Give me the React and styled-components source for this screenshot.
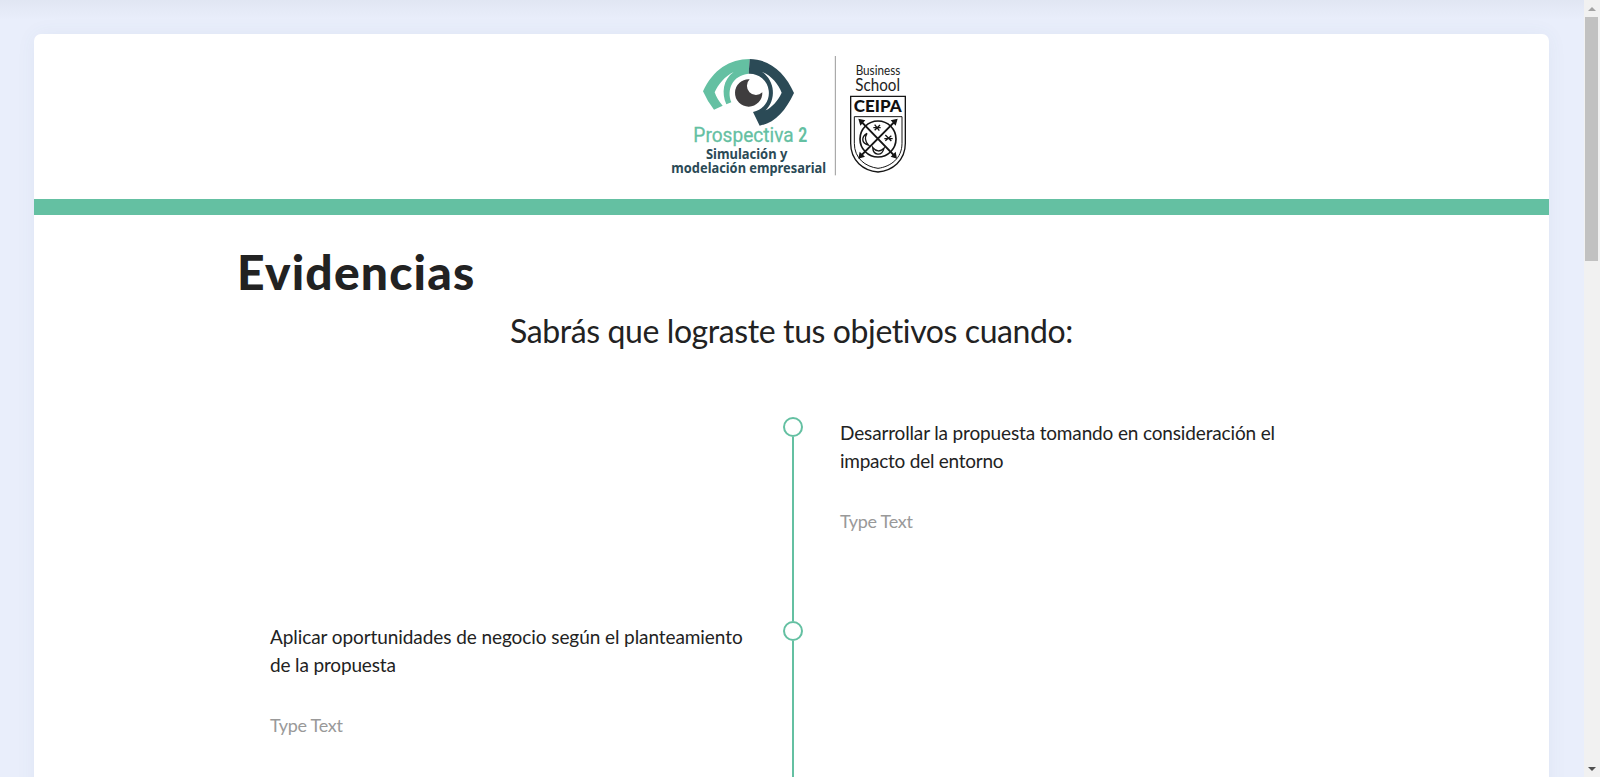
import React from "react";
import styled, { createGlobalStyle } from "styled-components";

const GREEN = "#64c0a2";
const NAVY = "#2b4a56";

const GlobalStyle = createGlobalStyle`
  * { box-sizing: border-box; }
  html, body { margin: 0; padding: 0; }
  body { overflow: hidden; font-family: Lato, "Liberation Sans", sans-serif; color: #222; }
`;

const Page = styled.div`
  display: flex;
  height: 777px;
  overflow: hidden;
  background: #e9eefb;
`;

const Viewport = styled.main`
  flex: 1;
  padding: 34px 35px 0 34px;
  overflow: hidden;
  background: linear-gradient(rgba(70, 80, 90, 0.05), rgba(70, 80, 90, 0) 20px);
`;

const Card = styled.article`
  height: 900px;
  background: #fff;
  border-radius: 7px;
  box-shadow: 0 0 20px rgba(60, 110, 140, 0.06);
`;

const Header = styled.header`
  display: flex;
  height: 181px;
  padding: 12px 0 0 626px;
  border-bottom: 16px solid ${GREEN};
`;

const Title = styled.h1`
  margin: 0;
  padding: 28px 0 0 203px;
  font-size: 48px;
  line-height: 58px;
  font-weight: 900;
  letter-spacing: 1.15px;
  white-space: nowrap;
`;

const Subtitle = styled.h2`
  margin: 0;
  padding-top: 8px;
  font-size: 32px;
  line-height: 44px;
  font-weight: 400;
  letter-spacing: -0.4px;
  text-align: center;
  white-space: nowrap;
`;

const Timeline = styled.section`
  display: flex;
  flex-direction: column;
  width: 1046px;
  margin: 64px 0 0 236px;
`;

const Entry = styled.div`
  display: grid;
  grid-template-columns: 476px 94px 476px;
  height: 204px;
`;

const Track = styled.div`
  grid-column: 2;
  grid-row: 1;
  display: flex;
  flex-direction: column;
  align-items: center;
`;

const Dot = styled.div`
  width: 20px;
  height: 20px;
  border: 2px solid ${GREEN};
  border-radius: 50%;
`;

const Stem = styled.div`
  flex: 1;
  width: 2px;
  background: ${GREEN};
`;

const Body = styled.div`
  grid-column: ${(p) => (p.$side === "right" ? 3 : 1)};
  grid-row: 1;
  padding-top: 2px;
  font-size: 19px;
  line-height: 28px;
`;

const Line = styled.div`
  white-space: nowrap;
  letter-spacing: ${(p) => p.$spacing}px;
`;

const Placeholder = styled.p`
  margin: 32px 0 0;
  color: #999;
  font-size: 18px;
  letter-spacing: -0.3px;
`;

const Scrollbar = styled.aside`
  display: flex;
  flex-direction: column;
  align-items: center;
  width: 16px;
  padding-right: 1px;
  background: #f1f1f1;
`;

const ArrowBox = styled.div`
  display: flex;
  align-items: center;
  justify-content: center;
  height: 17px;
`;

const Thumb = styled.div`
  width: 13px;
  height: 244px;
  margin-bottom: auto;
  background: #c1c1c1;
`;

function Logo() {
  return (
    <svg width="260" height="140" viewBox="0 0 780 420" aria-label="Prospectiva 2">
      <g transform="translate(114 26)">
        <path d="M155 13C95 13 45 45 15 110Q28 140 48 165L74 153C62 140 55 127 50 113C60 90 80 65 107 52C75 75 70 115 85 149L100 143C85 105 103 62 152 57Z" fill={GREEN} />
        <path d="M155 13C215 13 262 55 288 115C262 170 230 205 185 213L165 172A58 58 0 0 0 152 57Z" fill={NAVY} />
        <path d="M193 52C220 62 242 90 251 114C240 138 222 158 203 167C235 135 232 80 193 52Z" fill="#fff" />
        <path d="M155 74A41 41 0 1 0 193 113A21 21 0 0 1 155 74Z" fill="#3f3d3e" />
      </g>
      <g fontFamily="Roboto, sans-serif" fill={GREEN}>
        <text transform="translate(100 289) scale(0.87 1)" fontSize="62" textLength="346" lengthAdjust="spacingAndGlyphs" stroke={GREEN} strokeWidth="0.8">Prospectiva</text>
        <text x="415" y="289" fontSize="59" fontWeight="700" textLength="27" lengthAdjust="spacingAndGlyphs">2</text>
      </g>
      <g fontFamily="Noto Sans, sans-serif" fontWeight="700" fill={NAVY}>
        <text x="138" y="340" fontSize="40" textLength="244" lengthAdjust="spacingAndGlyphs">Simulación y</text>
        <text x="34" y="381" fontSize="40" textLength="464" lengthAdjust="spacingAndGlyphs">modelación empresarial</text>
      </g>
      <path d="M526 30V388" stroke="#999" strokeWidth="3" />
      <g fontFamily="Lato, sans-serif" fill="#222">
        <text x="587" y="86" fontSize="38" textLength="134" lengthAdjust="spacingAndGlyphs">Business</text>
        <text x="586" y="135" fontSize="50" textLength="134" lengthAdjust="spacingAndGlyphs">School</text>
        <text x="581" y="199" fontSize="51" fontWeight="900" fill="#111" textLength="144" lengthAdjust="spacing">CEIPA</text>
      </g>
      <g fill="none" stroke="#151515" strokeWidth="3">
        <path d="M572 151H736V292C736 344 697 374 654 378C610 374 572 344 572 292Z" strokeWidth="4" />
        <path d="M583 212H726V292C726 337 692 362 654 367C616 362 583 337 583 292Z" />
        <circle cx="654" cy="279" r="54" strokeWidth="5" />
        <path d="M601 224L705 331M707 224L601 331" strokeWidth="6" />
        <path d="M644 236L658 254M660 237L644 253M640 245H662M676 267L694 285M694 269L676 284M673 278H698" strokeWidth="4" />
        <path d="M621 262C603 273 604 292 625 297C615 286 613 275 621 262Z" strokeWidth="4" />
        <path d="M638 304C640 329 665 332 672 307C661 318 649 318 638 304Z" strokeWidth="4" />
      </g>
      <path d="M595 218L616 223L601 239ZM713 218L692 223L707 239ZM595 338L599 317L615 332ZM711 338L707 317L692 332Z" fill="#151515" />
    </svg>
  );
}

const entries = [
  {
    side: "right",
    lines: [
      { text: "Desarrollar la propuesta tomando en consideración el", spacing: -0.15 },
      { text: "impacto del entorno", spacing: -0.25 },
    ],
  },
  {
    side: "left",
    lines: [
      { text: "Aplicar oportunidades de negocio según el planteamiento", spacing: -0.08 },
      { text: "de la propuesta", spacing: -0.15 },
    ],
  },
];

export default function App() {
  return (
    <Page>
      <GlobalStyle />
      <Viewport>
        <Card>
          <Header><Logo /></Header>
          <Title>Evidencias</Title>
          <Subtitle>Sabrás que lograste tus objetivos cuando:</Subtitle>
          <Timeline>
            {entries.map((entry) => (
              <Entry key={entry.side}>
                <Track><Dot /><Stem /></Track>
                <Body $side={entry.side}>
                  {entry.lines.map((line) => (
                    <Line key={line.text} $spacing={line.spacing}>{line.text}</Line>
                  ))}
                  <Placeholder>Type Text</Placeholder>
                </Body>
              </Entry>
            ))}
          </Timeline>
        </Card>
      </Viewport>
      <Scrollbar>
        <ArrowBox>
          <svg width="8" height="4" viewBox="0 0 8 4"><path d="M0 4L4 0L8 4Z" fill="#a3a3a3" /></svg>
        </ArrowBox>
        <Thumb />
        <ArrowBox>
          <svg width="8" height="4" viewBox="0 0 8 4"><path d="M0 0L4 4L8 0Z" fill="#505050" /></svg>
        </ArrowBox>
      </Scrollbar>
    </Page>
  );
}
